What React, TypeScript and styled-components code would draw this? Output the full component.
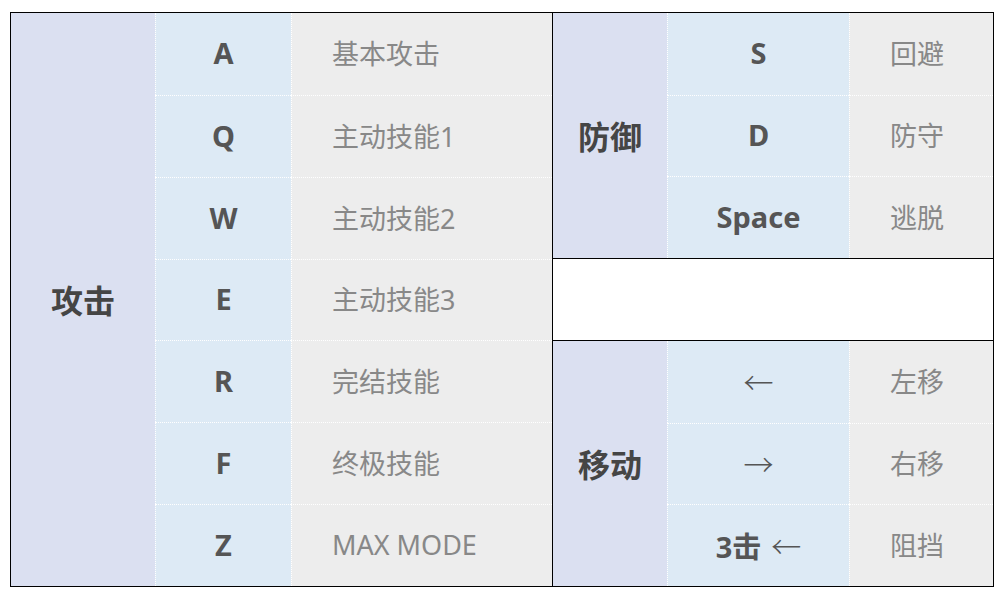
import React from "react";
import styled, { createGlobalStyle } from "styled-components";

const Global = createGlobalStyle`
  html, body { margin: 0; padding: 0; background: #ffffff; }
  body { font-family: "Noto Sans", "Noto Sans CJK SC", sans-serif; }
`;

const Page = styled.div`
  display: flex;
  padding: 12px 0 0 10px;
`;

const LeftTable = styled.div`
  display: grid;
  grid-template-columns: 144px 136px 261px;
  grid-template-rows: repeat(7, 1fr);
  height: 575px;
  box-sizing: border-box;
  border: 1px solid #000;
`;

const RightCol = styled.div`
  display: flex;
  flex-direction: column;
  width: 441px;
  height: 575px;
  box-sizing: border-box;
  border: 1px solid #000;
  border-left: none;
`;

const Block = styled.div`
  display: grid;
  grid-template-columns: 114px 182px 144px;
  grid-template-rows: repeat(3, 1fr);
  height: 245px;
`;

const Spacer = styled.div`
  height: 81px;
  background: #ffffff;
  border-top: 1px solid #000;
  border-bottom: 1px solid #000;
`;

const Label = styled.div`
  grid-column: 1;
  grid-row: 1 / -1;
  background: #dbe0f1;
  display: flex;
  align-items: center;
  justify-content: center;
  font-family: "Noto Sans CJK SC", sans-serif;
  font-weight: 700;
  font-size: 32px;
  color: #454545;
`;

const Cell = styled.div`
  display: flex;
  align-items: center;
  box-sizing: border-box;
  border-left: 1px dotted #ffffff;
  border-top: 1px dotted #ffffff;
  padding-bottom: 2px;
  &:nth-child(-n + 3) {
    border-top: none;
  }
`;

const Key = styled(Cell)`
  justify-content: center;
  background: #ddeaf5;
  font-weight: 700;
  font-size: 29px;
  color: #555555;
`;

const Action = styled(Cell)`
  background: #ededed;
  padding-left: 40px;
  font-size: 27px;
  color: #888888;
`;

const Arrow = styled.span<{ $gap?: boolean }>`
  font-family: "Noto Sans CJK SC", sans-serif;
  font-weight: 300;
  font-size: 30px;
  margin-left: ${(p) => (p.$gap ? "10px" : "0")};
`;

type Entry = { key: React.ReactNode; id: string; action: string };

const attack: Entry[] = [
  { id: "a", key: "A", action: "基本攻击" },
  { id: "q", key: "Q", action: "主动技能1" },
  { id: "w", key: "W", action: "主动技能2" },
  { id: "e", key: "E", action: "主动技能3" },
  { id: "r", key: "R", action: "完结技能" },
  { id: "f", key: "F", action: "终极技能" },
  { id: "z", key: "Z", action: "MAX MODE" },
];

const defense: Entry[] = [
  { id: "s", key: "S", action: "回避" },
  { id: "d", key: "D", action: "防守" },
  { id: "sp", key: "Space", action: "逃脱" },
];

const move: Entry[] = [
  { id: "l", key: <Arrow>←</Arrow>, action: "左移" },
  { id: "r", key: <Arrow>→</Arrow>, action: "右移" },
  { id: "b", key: <>3击<Arrow $gap>←</Arrow></>, action: "阻挡" },
];

const Rows = ({ items }: { items: Entry[] }) => (
  <>
    {items.map((e) => (
      <React.Fragment key={e.id}>
        <Key>{e.key}</Key>
        <Action>{e.action}</Action>
      </React.Fragment>
    ))}
  </>
);

export default function App() {
  return (
    <>
      <Global />
      <Page>
        <LeftTable>
          <Label>攻击</Label>
          <Rows items={attack} />
        </LeftTable>
        <RightCol>
          <Block>
            <Label>防御</Label>
            <Rows items={defense} />
          </Block>
          <Spacer />
          <Block>
            <Label>移动</Label>
            <Rows items={move} />
          </Block>
        </RightCol>
      </Page>
    </>
  );
}
